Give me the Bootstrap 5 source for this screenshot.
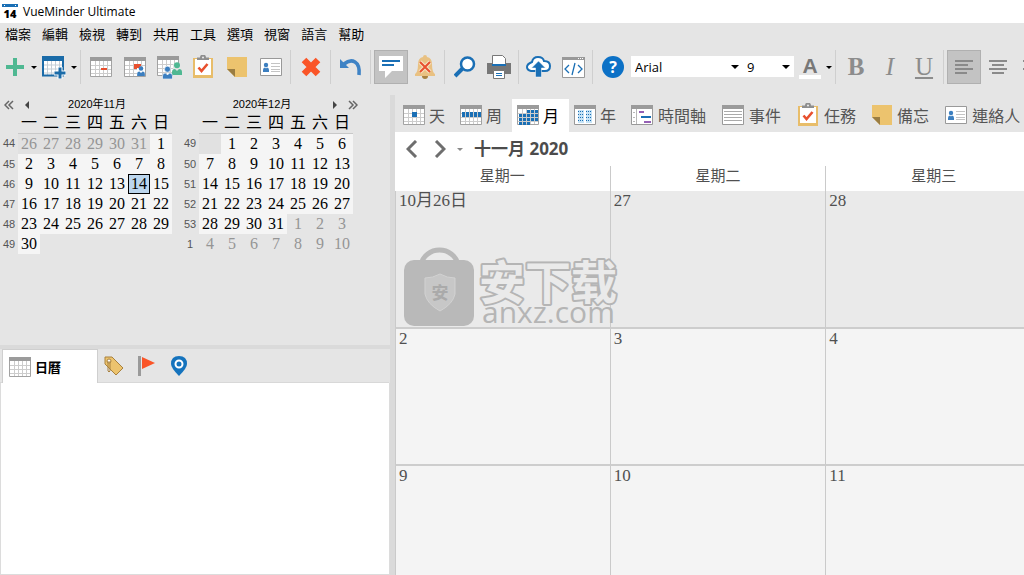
<!DOCTYPE html>
<html lang="zh-Hant">
<head>
<meta charset="utf-8">
<meta name="viewport" content="width=device-width, initial-scale=1">
<title>VueMinder Ultimate</title>
<link href="https://cdn.jsdelivr.net/npm/bootstrap@5.3.0/dist/css/bootstrap.min.css" rel="stylesheet">
<style>
  body { font-family: "Open Sans", "Noto Sans CJK TC", sans-serif; font-size: 13px; line-height: 20px; background: #e5e5e5; color: #000; }
  button { color: inherit; }
  svg { display: block; flex: none; }
  .titlebar { height: 23px; font-size: 12px; padding-left: 2px; gap: 5px; }
  .menubar { height: 22px; gap: 11px; padding-left: 5px; }
  .menubar a { color: #000; text-decoration: none; white-space: nowrap; }
  .toolbar { height: 50px; padding-top: 5px; }
  .tool { width: 34px; height: 34px; padding: 0; border: 1px solid transparent; border-radius: 0; background: none; display: flex; align-items: center; justify-content: center; flex: none; }
  .tool.pressed { background: #c3c3c3; border-color: #b0b0b0; }
  .tool-new { width: 30px; }
  .tool-cal { width: 32px; }
  .tool-drop { width: 8px; height: 34px; padding: 0; border: 0; background: none; flex: none; }
  .tool-color { width: 31px; }
  .tool-format { font-family: "Liberation Serif", serif; font-size: 25px; line-height: 30px; color: #8c8c8c; }
  .tool-sep { width: 6px; height: 34px; flex: none; }
  .tool-sep::before { content: ""; display: block; width: 1px; height: 34px; margin-left: 2px; background: #cfcfcf; }
  .tri { display: block; width: 0; margin: auto; border: 3px solid transparent; border-top-color: #000; border-bottom: 0; }
  .pick { display: flex; align-items: center; height: 21px; margin-top: 6px; background: #fff; padding-right: 4px; flex: none; }
  .pick select { appearance: none; border: 0; background: none; height: 21px; padding: 0 0 0 4px; font-size: 13px; line-height: 20px; color: #000; outline: 0; flex: 1; min-width: 0; }
  .pick i { border: 4px solid transparent; border-top-color: #000; border-bottom: 0; }
  .pick-font { width: 112px; margin-left: 1px; }
  .pick-size { width: 51px; }
  .side { flex: 0 0 390px; min-width: 0; }
  .side-dates { height: 250px; }
  .side-nav { display: grid; grid-template-columns: 18px 18px 122px 44px 120px 4px 18px 18px; height: 17px; padding-top: 1px; font-size: 12px; line-height: 16px; text-align: center; color: #000; }
  .side-nav span { font-family: "Liberation Sans", "Noto Sans CJK TC", sans-serif; font-size: 11px; line-height: 17px; }
  .side-nav button { padding: 0; border: 0; background: none; display: grid; place-items: center; }
  .months { gap: 9px; }
  .mini { border-collapse: collapse; table-layout: fixed; width: 172px; font-family: "Liberation Serif", "Noto Sans CJK TC", serif; font-size: 16px; line-height: 20px; text-align: center; }
  .mini th, .mini td { padding: 0; height: 20px; }
  .mini thead th { height: 21px; font-weight: 400; border-bottom: 1px solid #c8c8c8; line-height: 19px; }
  .mini thead th:first-child { width: 18px; border: 0; }
  .mini tbody th { font-family: "Liberation Sans", sans-serif; font-size: 11px; font-weight: 400; color: #555; }
  .mini td { background: #f5f5f5; }
  .mini td.out { background: #e1e1e1; color: #959595; }
  .mini td.after { background: none; color: #959595; }
  .mini td.today { background: #bcd6ee; outline: 1px solid #000; outline-offset: -1px; }
  .side-split { height: 4px; background: #dadada; }
  .side-tabs { height: 34px; padding-left: 2px; border-bottom: 1px solid #d8d8d8; margin-right: 1px; }
  .side-tab { border: 0; background: none; padding: 0 8px 0 6px; height: 34px; display: flex; align-items: center; gap: 4px; }
  .side-tab.current { width: 96px; background: #fff; border: 1px solid #cfcfcf; border-bottom: 0; font-weight: 700; font-family: "Noto Sans CJK TC", sans-serif; }
  .side-body { border: 1px solid #dcdcdc; border-top: 0; }
  .v-split { flex: 0 0 5px; background: #dadada; }
  .views { height: 37px; padding: 4px 0 0 3px; }
  .view-tab { border: 0; background: none; height: 33px; padding: 0 10px 2px 5px; display: flex; align-items: center; gap: 4px; flex: none; font-family: "Noto Sans CJK TC", sans-serif; font-size: 16px; line-height: 24px; color: #555; }
  .view-tab.current { background: #fff; color: #000; }
  .view-tab.wide { gap: 5px; padding-right: 11px; }
  .period { height: 34px; padding-left: 7px; background: #fff; }
  .period button { border: 0; background: none; padding: 0; width: 20px; height: 30px; display: grid; place-items: center; }
  .period h1 { font-size: 17px; line-height: 24px; font-weight: 700; margin: 0; color: #4c4c4c; }
  .board { border-collapse: separate; border-spacing: 0; table-layout: fixed; width: 100%; min-width: 647px; color: #505050; font-family: "Liberation Serif", "Noto Sans CJK TC", serif; font-size: 17px; line-height: 18px; }
  .board th { height: 25px; padding: 0 0 5px; background: #fff; border-right: 1px solid #cacaca; font-size: 15px; font-weight: 400; text-align: center; }
  .board td { height: 137px; padding: 1px 3px; vertical-align: top; background: #f4f4f4; border-right: 1px solid #cacaca; border-bottom: 2px solid #cdcdcd; }
  .board td:first-child { border-left: 1px solid #cacaca; }
  .board .past td { height: 138px; background: #eaeaea; }
  .watermark { left: 9px; top: 80px; }
</style>
</head>
<body class="vh-100 d-flex flex-column overflow-hidden">
<svg width="0" height="0" class="position-absolute" aria-hidden="true">
  <symbol id="grid" viewBox="0 0 22 22">
    <path fill="#fff" d="M1 2h20v19H1z"/>
    <path d="M1 9.500h20M1 13.500h20M1 17.500h20M5.500 5v15M9.500 5v15M13.500 5v15M17.500 5v15" fill="none" stroke="#ccc"/>
    <path d="M.5 2v18.500h21V2" fill="none" stroke="#a2a2a2"/><path fill="#9b9b9b" d="M0 1h22v4H0z"/>
  </symbol>
  <symbol id="task" viewBox="0 0 22 24">
    <path fill="#e8bd6a" d="M1 3h20v20H1z"/><path fill="#fff" d="M3 4h16v16H3z"/>
    <path fill="#8f8f8f" d="M5 5V2.500h3a3 3 0 0 1 6 0h3V5z"/><circle cx="11" cy="2.500" r="1" fill="#eee"/>
    <path d="M6.500 12.500l3 3.500 6-7" fill="none" stroke="#e8502e" stroke-width="2.600"/>
  </symbol>
  <symbol id="note" viewBox="0 0 20 20">
    <path fill="#ecc36e" d="M0 0h20v20H8L0 12z"/><path fill="#9a7d42" d="M0 12h8v8z"/>
  </symbol>
  <symbol id="contact" viewBox="0 0 22 18">
    <path fill="#fff" stroke="#999" d="M.5.500h21v17H.500z"/>
    <circle cx="6" cy="7" r="2.200" fill="#3c7fc0"/><path fill="#3c7fc0" d="M3 14v-2q0-2.500 2-2.500l1 1 1-1q2 0 2 2.500v2z"/>
    <path stroke="#c4c4c4" d="M11 5.500h9M11 8.500h9M11 11.500h9M11 13.500h9"/>
  </symbol>
  <symbol id="person" viewBox="0 0 10 13"><circle cx="5" cy="3.200" r="3"/><path d="M0 13v-3q0-3 3-3l2 2 2-2q3 0 3 3v3z"/></symbol>
</svg>

<header>
  <div class="titlebar bg-white d-flex align-items-center">
    <svg width="16" height="16" viewBox="0 0 16 16"><path fill="#1a6fb5" d="M0 0h16v3H0z"/><path fill="#fff" d="M2 1h1v1H2zM13 1h1v1h-1z"/><text x="8" y="14" text-anchor="middle" font-family="Open Sans" font-weight="800" font-size="11">14</text></svg>
    <span>VueMinder Ultimate</span>
  </div>
  <nav class="menubar d-flex align-items-center" aria-label="主選單">
    <a href="#">檔案</a><a href="#">編輯</a><a href="#">檢視</a><a href="#">轉到</a><a href="#">共用</a><a href="#">工具</a><a href="#">選項</a><a href="#">視窗</a><a href="#">語言</a><a href="#">幫助</a>
  </nav>
  <div class="toolbar d-flex overflow-hidden" role="toolbar">
    <button class="tool tool-new" aria-label="新增"><svg width="20" height="20"><path stroke="#4fb892" stroke-width="4" d="M1 10h18M10 1v18"/></svg></button>
    <button class="tool-drop" aria-label="更多"><i class="tri"></i></button>
    <button class="tool tool-cal" aria-label="新增日曆"><svg width="24" height="24" viewBox="0 0 24 24"><path fill="#fff" d="M1 2h20v19H1z"/><path d="M1 10h20M1 14h20M1 18h20M5.500 6v14M9.500 6v14M13.500 6v14M17.500 6v14" fill="none" stroke="#c4ced6"/><path d="M1 2v18.500h20V2" fill="none" stroke="#1a6ba8" stroke-width="2"/><path fill="#1a6ba8" d="M0 1h22v5H0z"/><path stroke="#fff" stroke-width="5" d="M12 18h12M18 12v12"/><path stroke="#1a6ba8" stroke-width="3" d="M12.500 18h11M18 12.500v11"/></svg></button>
    <button class="tool-drop" aria-label="更多"><i class="tri"></i></button>
    <span class="tool-sep"></span>
    <button class="tool" aria-label="事件"><svg width="22" height="22"><use href="#grid"/><path fill="#e8502e" d="M11 12h6v2h-6z"/></svg></button>
    <button class="tool" aria-label="約會"><svg width="22" height="22"><use href="#grid"/><path fill="#e8502e" d="M10 8h7v2l-3 3h-4z"/><path fill="#fff" d="M13 12h8v8h-8z"/><use href="#person" x="13" y="10" width="8" height="10" fill="#3c7fc0"/></svg></button>
    <button class="tool" aria-label="會議"><svg width="26" height="26"><use href="#grid" x="1" y="1" width="22" height="22"/><path fill="#e5e5e5" d="M17 10h9v16h-9z"/><use href="#person" x="16" y="8" width="10" height="13" fill="#4fb892"/><use href="#person" x="6" y="12" width="11" height="13" fill="#3c7fc0" stroke="#fff" stroke-width=".6"/></svg></button>
    <button class="tool" aria-label="任務"><svg width="22" height="24"><use href="#task"/></svg></button>
    <button class="tool" aria-label="備忘"><svg width="20" height="20"><use href="#note"/></svg></button>
    <button class="tool" aria-label="連絡人"><svg width="22" height="18"><use href="#contact"/></svg></button>
    <span class="tool-sep"></span>
    <button class="tool" aria-label="刪除"><svg width="20" height="20"><path stroke="#fa5528" stroke-width="6.500" d="M3 3l14 14M17 3L3 17"/></svg></button>
    <span class="tool-sep"></span>
    <button class="tool" aria-label="復原"><svg width="24" height="22"><path d="M5 8q6-5 11-2t4 13" fill="none" stroke="#3f83c5" stroke-width="3.600"/><path fill="#3f83c5" d="M1 3v9h9z"/></svg></button>
    <span class="tool-sep"></span>
    <button class="tool pressed" aria-label="彈出註解" aria-pressed="true"><svg width="24" height="22"><path fill="#fff" d="M0 0h24v15H13l-7 7v-7H0z"/><path stroke="#1a6fb5" stroke-width="2" d="M3 5h18M3 9h12"/></svg></button>
    <button class="tool" aria-label="提醒"><svg width="20" height="24"><path fill="#e9c182" d="M8 2a2 2 0 0 1 4 0q5 1 5 7 0 8 3 10v2H0v-2q3-2 3-10 0-6 5-7z"/><path fill="#a8813f" d="M7 21h6q0 3-3 3t-3-3z"/><path stroke="#f6e3c4" stroke-width="4" d="M5 7l10 10M15 7L5 17"/><path stroke="#e8502e" stroke-width="2" d="M5 7l10 10M15 7L5 17"/></svg></button>
    <span class="tool-sep"></span>
    <button class="tool" aria-label="搜尋"><svg width="22" height="22"><path stroke="#1a6fb5" stroke-width="4" d="M1 20l8-8"/><circle cx="13.500" cy="8" r="6.500" fill="#fff" stroke="#1a6fb5" stroke-width="2.500"/></svg></button>
    <button class="tool" aria-label="列印"><svg width="24" height="24"><path fill="#777" d="M0 8h24v11H0z"/><path fill="#fff" stroke="#777" d="M5.500.500h10l3 3V10h-13zM6.500 15.500h11v8h-11z"/><path stroke="#1a6fb5" stroke-width="2" d="M5 10h14"/><path stroke="#1a6fb5" d="M9 18.500h6M9 20.500h6"/></svg></button>
    <span class="tool-sep"></span>
    <button class="tool" aria-label="上傳"><svg width="26" height="22"><path fill="#fff" stroke="#1a6fb5" stroke-width="2" d="M7 15H5q-4-1-4-4t5-5q1-5 6-5t6 4q6 0 6 5t-5 5z"/><path fill="#1a6fb5" stroke="#fff" stroke-width=".5" d="M12.500 5l7 7h-4v9h-6v-9h-4z"/></svg></button>
    <button class="tool" aria-label="原始碼"><svg width="23" height="21"><path fill="#fff" stroke="#999" d="M.5.500h22v20H.500z"/><path fill="#999" d="M0 0h23v3H0z"/><path stroke="#fff" stroke-dasharray="1 1" d="M16 1.500h6"/><path d="M7 8l-4 4 4 4M16 8l4 4-4 4M13 6l-3 12" fill="none" stroke="#1a6fb5" stroke-width="1.300"/></svg></button>
    <span class="tool-sep"></span>
    <button class="tool" aria-label="說明"><svg width="22" height="22"><circle cx="11" cy="11" r="11" fill="#0c71c6"/><text x="11" y="17" text-anchor="middle" font-size="16" font-weight="700" fill="#fff">?</text></svg></button>
    <label class="pick pick-font"><select aria-label="字型"><option>Arial</option></select><i></i></label>
    <label class="pick pick-size"><select aria-label="字型大小"><option>9</option></select><i></i></label>
    <button class="tool tool-color" aria-label="文字顏色"><svg width="22" height="28"><text x="11" y="20" text-anchor="middle" font-family="Liberation Sans" font-size="21" font-weight="700" fill="#777">A</text><path fill="#fff" d="M0 22h22v4H0z"/></svg></button>
    <button class="tool-drop" aria-label="更多顏色"><i class="tri"></i></button>
    <span class="tool-sep"></span>
    <button class="tool tool-format fw-bold">B</button>
    <button class="tool tool-format fst-italic">I</button>
    <button class="tool tool-format text-decoration-underline">U</button>
    <span class="tool-sep"></span>
    <button class="tool pressed" aria-label="靠左對齊" aria-pressed="true"><svg width="18" height="16"><path stroke="#8a8a8a" stroke-width="2" d="M0 2h18M0 6h13M0 10h18M0 14h12"/></svg></button>
    <button class="tool" aria-label="置中對齊"><svg width="18" height="16"><path stroke="#8a8a8a" stroke-width="2" d="M0 2h18M3 6h12M0 10h18M3 14h12"/></svg></button>
    <button class="tool" aria-label="靠右對齊"><svg width="18" height="16"><path stroke="#8a8a8a" stroke-width="2" d="M0 2h18M5 6h13M0 10h18M6 14h12"/></svg></button>
  </div>
</header>

<main class="d-flex flex-grow-1 overflow-hidden">
  <aside class="side d-flex flex-column">
    <section class="side-dates">
      <div class="side-nav">
        <button aria-label="上一年"><svg width="10" height="10"><path d="M5 1L1 5l4 4M9 1L5 5l4 4" fill="none" stroke="#666" stroke-width="1.500"/></svg></button>
        <button aria-label="上個月"><svg width="4" height="8"><path fill="#444" d="M4 0v8L0 4z"/></svg></button>
        <span>2020年11月</span><span></span><span>2020年12月</span><span></span>
        <button aria-label="下個月"><svg width="4" height="8"><path fill="#444" d="M0 0v8l4-4z"/></svg></button>
        <button aria-label="下一年"><svg width="10" height="10"><path d="M1 1l4 4-4 4M5 1l4 4-4 4" fill="none" stroke="#666" stroke-width="1.500"/></svg></button>
      </div>
      <div class="months d-flex align-items-start">
        <table class="mini">
          <thead><tr><th></th><th>一</th><th>二</th><th>三</th><th>四</th><th>五</th><th>六</th><th>日</th></tr></thead>
          <tbody>
            <tr><th>44</th><td class="out">26</td><td class="out">27</td><td class="out">28</td><td class="out">29</td><td class="out">30</td><td class="out">31</td><td>1</td></tr>
            <tr><th>45</th><td>2</td><td>3</td><td>4</td><td>5</td><td>6</td><td>7</td><td>8</td></tr>
            <tr><th>46</th><td>9</td><td>10</td><td>11</td><td>12</td><td>13</td><td class="today">14</td><td>15</td></tr>
            <tr><th>47</th><td>16</td><td>17</td><td>18</td><td>19</td><td>20</td><td>21</td><td>22</td></tr>
            <tr><th>48</th><td>23</td><td>24</td><td>25</td><td>26</td><td>27</td><td>28</td><td>29</td></tr>
            <tr><th>49</th><td>30</td><td class="after" colspan="6"></td></tr>
          </tbody>
        </table>
        <table class="mini">
          <thead><tr><th></th><th>一</th><th>二</th><th>三</th><th>四</th><th>五</th><th>六</th><th>日</th></tr></thead>
          <tbody>
            <tr><th>49</th><td class="out"></td><td>1</td><td>2</td><td>3</td><td>4</td><td>5</td><td>6</td></tr>
            <tr><th>50</th><td>7</td><td>8</td><td>9</td><td>10</td><td>11</td><td>12</td><td>13</td></tr>
            <tr><th>51</th><td>14</td><td>15</td><td>16</td><td>17</td><td>18</td><td>19</td><td>20</td></tr>
            <tr><th>52</th><td>21</td><td>22</td><td>23</td><td>24</td><td>25</td><td>26</td><td>27</td></tr>
            <tr><th>53</th><td>28</td><td>29</td><td>30</td><td>31</td><td class="after">1</td><td class="after">2</td><td class="after">3</td></tr>
            <tr><th>1</th><td class="after">4</td><td class="after">5</td><td class="after">6</td><td class="after">7</td><td class="after">8</td><td class="after">9</td><td class="after">10</td></tr>
          </tbody>
        </table>
      </div>
    </section>
    <div class="side-split"></div>
    <div class="side-tabs d-flex">
      <button class="side-tab current"><svg width="22" height="22"><use href="#grid"/></svg>日曆</button>
      <button class="side-tab" aria-label="類別"><svg width="20" height="20"><path fill="#ecc36e" stroke="#a8813f" d="M1 1h7l11 11-7 7L1 8z"/><circle cx="5" cy="5" r="2" fill="#fff" stroke="#a8813f"/><path d="M4 5v10q1 2 2 0V5" fill="none" stroke="#a8813f"/></svg></button>
      <button class="side-tab" aria-label="優先順序"><svg width="17" height="20"><path fill="#9a9a9a" d="M0 0h3v20H0z"/><path fill="#fa5528" d="M4 1l13 6-13 6z"/></svg></button>
      <button class="side-tab ps-2" aria-label="位置"><svg width="16" height="20"><path fill="#1573bd" d="M8 0q8 0 8 8 0 4-8 12Q0 12 0 8q0-8 8-8z"/><circle cx="8" cy="8" r="3.500" fill="none" stroke="#fff" stroke-width="2"/></svg></button>
    </div>
    <div class="side-body bg-white flex-grow-1"></div>
  </aside>
  <div class="v-split"></div>

  <section class="flex-grow-1 overflow-hidden">
    <div class="views d-flex overflow-hidden">
      <button class="view-tab"><svg width="22" height="22"><use href="#grid"/><path fill="#1a6fb5" d="M9 8h5v5H9z"/></svg>天</button>
      <button class="view-tab"><svg width="22" height="22"><use href="#grid"/><path stroke="#1a6fb5" stroke-width="5" stroke-dasharray="3 1" d="M2 10.500h19"/></svg>周</button>
      <button class="view-tab current"><svg width="22" height="22"><use href="#grid"/><path stroke="#1a6fb5" stroke-width="3" stroke-dasharray="3 1" d="M10 7.500h11M2 11.500h19M2 15.500h19M2 19.500h11"/></svg>月</button>
      <button class="view-tab"><svg width="22" height="22"><path fill="#fff" stroke="#999" d="M.5 2.500h21v18H.500z"/><path fill="#9b9b9b" d="M0 1h22v4H0z"/><path fill="#c6e3f6" d="M4 6h6v13H4zM12 6h6v13h-6z"/><path stroke="#1a6fb5" stroke-dasharray="1 1" d="M4 7.500h6M12 7.500h6M4 10.500h6M12 10.500h6M4 13.500h6M12 13.500h6M4 16.500h6M12 16.500h6"/></svg>年</button>
      <button class="view-tab wide"><svg width="22" height="22"><path fill="#fff" stroke="#999" d="M.5 2.500h21v18H.500z"/><path fill="#9b9b9b" d="M0 1h22v4H0z"/><path stroke="#b8b8b8" d="M5.500 5v15M2 8.500h2M2 13.500h2M2 17.500h2"/><path stroke="#9560b5" stroke-width="2" d="M8 8h5M13 18h7"/><path stroke="#1a6fb5" stroke-width="2" d="M10 13h10"/></svg>時間軸</button>
      <button class="view-tab wide"><svg width="22" height="22"><path fill="#fff" stroke="#999" d="M.5 2.500h21v18H.500z"/><path fill="#9b9b9b" d="M0 1h22v4H0z"/><path stroke="#aaa" stroke-width="1" d="M2 7.500h18M2 10.500h18M2 13.500h18M2 16.500h18"/></svg>事件</button>
      <button class="view-tab wide"><svg width="22" height="24"><use href="#task"/></svg>任務</button>
      <button class="view-tab wide"><svg width="20" height="20"><use href="#note"/></svg>備忘</button>
      <button class="view-tab wide"><svg width="22" height="18"><use href="#contact"/></svg>連絡人</button>
    </div>
    <div class="period d-flex align-items-center">
      <button aria-label="上一期"><svg width="12" height="18"><path d="M10 1L2 9l8 8" fill="none" stroke="#6e6e6e" stroke-width="3"/></svg></button>
      <button class="ms-2" aria-label="下一期"><svg width="12" height="18"><path d="M2 1l8 8-8 8" fill="none" stroke="#6e6e6e" stroke-width="3"/></svg></button>
      <button aria-label="選擇日期"><svg width="6" height="3"><path fill="#8a8a8a" d="M0 0h6L3 3z"/></svg></button>
      <h1 class="ms-1">十一月 2020</h1>
    </div>
    <div class="position-relative">
      <table class="board">
        <thead><tr><th>星期一</th><th>星期二</th><th>星期三</th></tr></thead>
        <tbody>
          <tr class="past"><td>10月26日</td><td>27</td><td>28</td></tr>
          <tr><td>2</td><td>3</td><td>4</td></tr>
          <tr><td>9</td><td>10</td><td>11</td></tr>
        </tbody>
      </table>
      <svg class="watermark position-absolute" width="220" height="92" viewBox="0 0 220 92">
        <path d="M17 18a19 18 0 0 1 37 0" fill="none" stroke="#b9b9b9" stroke-width="5"/>
        <rect y="14" width="70" height="66" rx="10" fill="#b9b9b9"/>
        <path d="M36 28q7 4 15 4v16q-2 10-15 17-13-7-15-17V32q8 0 15-4z" fill="#c7c7c7" stroke="#d2d2d2"/>
        <text x="36" y="53" text-anchor="middle" font-family="Noto Sans CJK SC" font-size="17" font-weight="700" fill="#aaa">安</text>
        <text x="75" y="53" font-family="Noto Sans CJK SC" font-size="46" font-weight="700" fill="#eaeaea" stroke="#b5b5b5" stroke-width="4" stroke-linejoin="round" paint-order="stroke">安下载</text>
        <text x="78" y="77" font-family="Open Sans" font-size="30" fill="#b5b5b5">anxz.com</text>
      </svg>
    </div>
  </section>
</main>
<script src="https://cdn.jsdelivr.net/npm/bootstrap@5.3.0/dist/js/bootstrap.bundle.min.js"></script>
</body>
</html>
